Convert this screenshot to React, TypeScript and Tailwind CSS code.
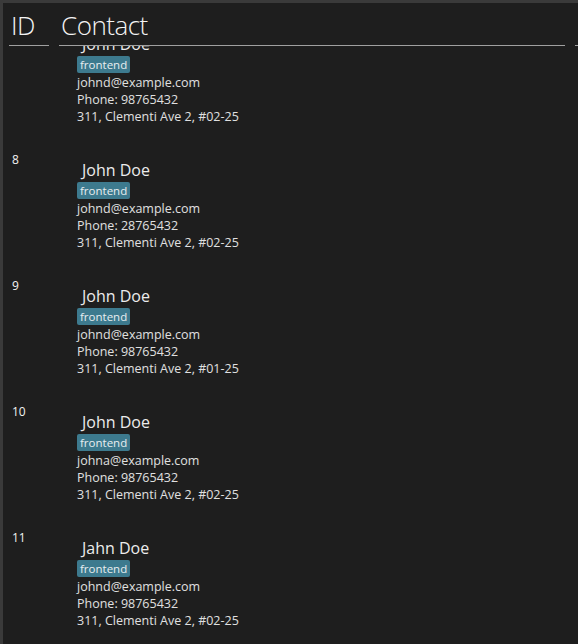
const persons = [
    { id: 7, name: "John Doe", tag: "frontend", email: "johnd@example.com", phone: "98765432", address: "311, Clementi Ave 2, #02-25" },
    { id: 8, name: "John Doe", tag: "frontend", email: "johnd@example.com", phone: "28765432", address: "311, Clementi Ave 2, #02-25" },
    { id: 9, name: "John Doe", tag: "frontend", email: "johnd@example.com", phone: "98765432", address: "311, Clementi Ave 2, #01-25" },
    { id: 10, name: "John Doe", tag: "frontend", email: "johna@example.com", phone: "98765432", address: "311, Clementi Ave 2, #02-25" },
    { id: 11, name: "Jahn Doe", tag: "frontend", email: "johnd@example.com", phone: "98765432", address: "311, Clementi Ave 2, #02-25" },
];

const PersonRow = ({ person }: { person: (typeof persons)[number] }) => (
    <div className="flex h-[126px] shrink-0">
        <div className="w-[74px] shrink-0 pl-[9px] pt-[6px] text-[12px] leading-[16px] text-[#f2f2f2]">
            {person.id}
        </div>
        <div className="flex flex-col pt-[14px] text-[12.5px] leading-[17px] text-[#e0e0e0]">
            <div className="pl-[5px] text-[16px] leading-[21px] text-[#ececec]">{person.name}</div>
            <div className="mt-[1px] flex">
                <span className="h-[17px] rounded-[2px] bg-[#3d7a8e] px-[3px] text-[11.5px] leading-[17px] text-[#e8eef0]">
                    {person.tag}
                </span>
            </div>
            <div className="mt-[1px]">{person.email}</div>
            <div>Phone: {person.phone}</div>
            <div>{person.address}</div>
        </div>
    </div>
);

export default function App() {
    return (
        <div
            className="flex h-[644px] w-[578px] flex-col bg-[#3a3a3a] pl-[3px] pt-[3px]"
            style={{ fontFamily: '"Open Sans", "Noto Sans", sans-serif' }}
        >
            <div className="flex flex-1 flex-col overflow-hidden bg-[#1e1e1e]">
                {/* header */}
                <div className="relative z-10 flex h-[43px] shrink-0 items-end overflow-hidden bg-[#1e1e1e] text-[26px] font-light leading-[40px] tracking-[-0.5px] text-[#f4f4f4]">
                    <div className="ml-[6px] w-[40px] shrink-0 border-b border-[#a0a0a0] pl-[2px]">ID</div>
                    <div className="ml-[10px] w-[506px] shrink-0 border-b border-[#a0a0a0] pl-[2px]">Contact</div>
                    <div className="ml-[10px] w-[20px] shrink-0 border-b border-[#a0a0a0]">&nbsp;</div>
                </div>
                {/* list */}
                <div className="flex-1 overflow-hidden">
                    <div className="-mt-[26px] flex flex-col">
                        {persons.map((p) => (
                            <PersonRow key={p.id} person={p} />
                        ))}
                    </div>
                </div>
            </div>
        </div>
    );
}
